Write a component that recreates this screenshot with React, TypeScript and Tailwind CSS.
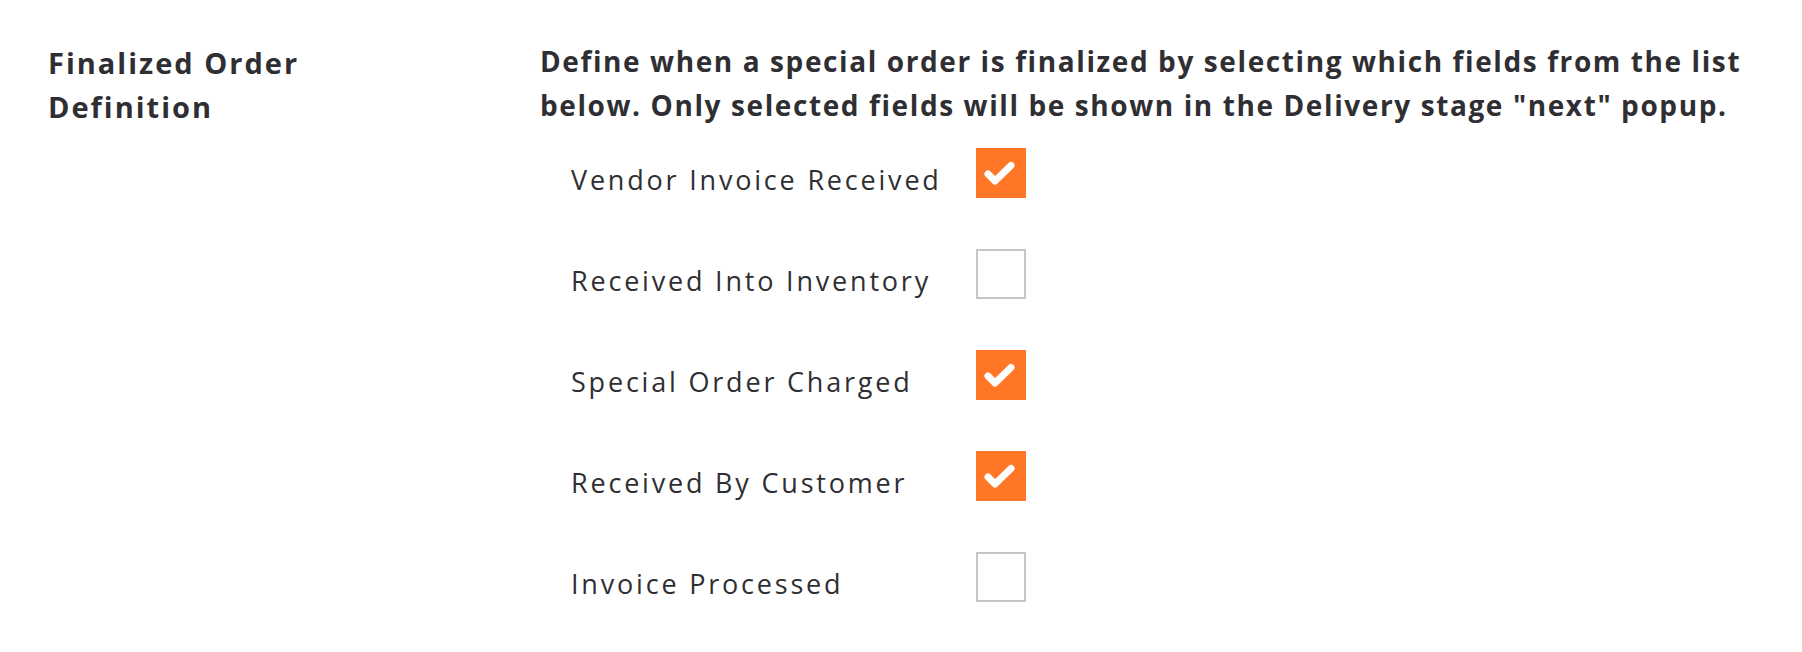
const fields = [
  { label: "Vendor Invoice Received", checked: true },
  { label: "Received Into Inventory", checked: false },
  { label: "Special Order Charged", checked: true },
  { label: "Received By Customer", checked: true },
  { label: "Invoice Processed", checked: false },
];

function Checkbox({ checked }: { checked: boolean }) {
  if (checked) {
    return (
      <div className="w-[50px] h-[50px] bg-[#ff7626] flex items-center justify-center shrink-0">
        <svg width="50" height="50" viewBox="0 0 50 50">
          <path
            d="M12 26 L19 33 L35 17.5"
            fill="none"
            stroke="#ffffff"
            strokeWidth={7}
            strokeLinecap="round"
            strokeLinejoin="round"
          />
        </svg>
      </div>
    );
  }
  return <div className="w-[50px] h-[50px] border-2 border-[#c6c6c6] bg-white shrink-0" />;
}

export default function App() {
  return (
    <div className="min-h-screen bg-white text-[#2f2f33] font-['Open_Sans',sans-serif]">
      <div className="flex pt-[39px] pl-[48px]">
        <div className="w-[492px] shrink-0 pt-[2px] text-[29px] font-bold leading-[44px] tracking-[2px]">
          Finalized Order
          <br />
          Definition
        </div>
        <div>
          <p className="text-[28px] font-bold leading-[44px] tracking-[1.6px]">
            Define when a special order is finalized by selecting which fields from the list
            <br />
            below. Only selected fields will be shown in the Delivery stage "next" popup.
          </p>
          <div className="flex flex-col gap-[51px] mt-[21px] pl-[31px]">
            {fields.map((f) => (
              <div key={f.label} className="flex items-center h-[50px]">
                <span className="w-[405px] text-[27px] leading-[36px] tracking-[2.8px] pt-[14px]">{f.label}</span>
                <Checkbox checked={f.checked} />
              </div>
            ))}
          </div>
        </div>
      </div>
    </div>
  );
}
